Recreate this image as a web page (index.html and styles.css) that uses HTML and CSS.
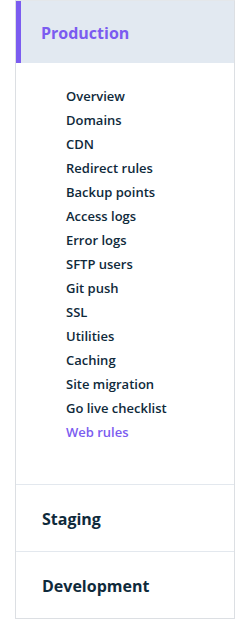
FILE: index.html
```html
<!DOCTYPE html>
<html>
<head>
<meta charset="utf-8">
<link rel="stylesheet" href="styles.css">
</head>
<body>
<nav class="panel">
  <section class="env env-active">
    <div class="env-head">Production</div>
    <ul class="sub">
      <li>Overview</li>
      <li>Domains</li>
      <li>CDN</li>
      <li>Redirect rules</li>
      <li>Backup points</li>
      <li>Access logs</li>
      <li>Error logs</li>
      <li>SFTP users</li>
      <li>Git push</li>
      <li>SSL</li>
      <li>Utilities</li>
      <li>Caching</li>
      <li>Site migration</li>
      <li>Go live checklist</li>
      <li class="current">Web rules</li>
    </ul>
  </section>
  <section class="env">
    <div class="env-head">Staging</div>
  </section>
  <section class="env">
    <div class="env-head">Development</div>
  </section>
</nav>
</body>
</html>
```

FILE: styles.css
```css
html, body {
  margin: 0;
  padding: 0;
  background: #ffffff;
}
body {
  font-family: "Open Sans", "Liberation Sans", sans-serif;
  color: #0f2a3b;
}
.panel {
  margin-left: 15px;
  width: 218px;
  border: 1px solid #dcdfe3;
  border-top-color: #e4e7ea;
  display: flex;
  flex-direction: column;
}
.env + .env {
  border-top: 1px solid #e3e8ee;
}
.env-head {
  height: 66px;
  display: flex;
  align-items: center;
  padding-left: 26px;
  padding-top: 2px;
  font-size: 16px;
  font-weight: 700;
  color: #0f2a3b;
  box-sizing: border-box;
}
.env-active .env-head {
  height: 62px;
  background: #e2e9f1;
  border-left: 5px solid #7b5cf0;
  padding-left: 20px;
  color: #7b5cf0;
}
.sub {
  list-style: none;
  margin: 0;
  padding: 21px 0 40px 50px;
}
.sub li {
  height: 24px;
  line-height: 24px;
  font-size: 13px;
  font-weight: 600;
  color: #0f2a3b;
}
.sub li.current {
  color: #7b5cf0;
}
```
